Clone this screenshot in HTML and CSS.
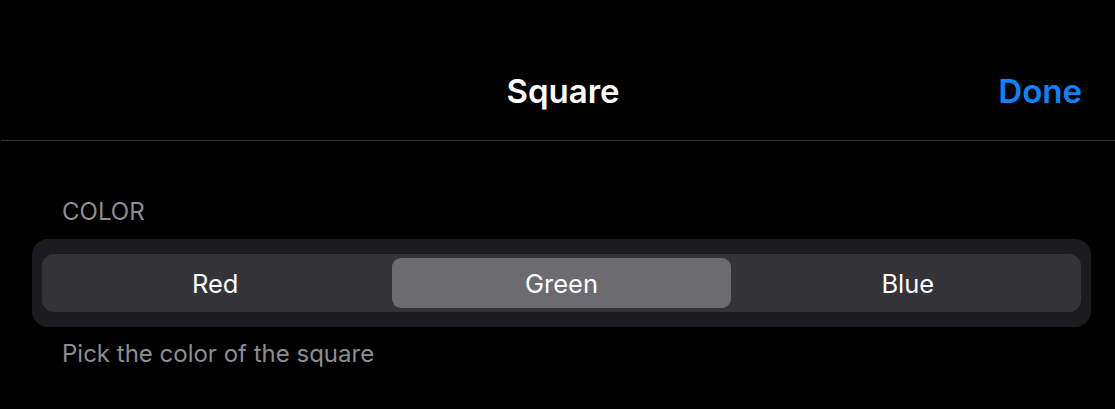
FILE: index.html
```html
<!DOCTYPE html>
<html>
<head>
<meta charset="utf-8">
<link rel="stylesheet" href="styles.css">
</head>
<body>
<div class="sheet">
  <header class="navbar">
    <div class="nav-side"></div>
    <h1 class="nav-title">Square</h1>
    <div class="nav-side nav-right"><span class="done">Done</span></div>
  </header>
  <main class="content">
    <div class="section-header">COLOR</div>
    <div class="card">
      <div class="segmented">
        <div class="segment">Red</div>
        <div class="segment selected">Green</div>
        <div class="segment">Blue</div>
      </div>
    </div>
    <div class="section-footer">Pick the color of the square</div>
  </main>
</div>
</body>
</html>
```
FILE: styles.css
```css
* { box-sizing: border-box; }
html, body { margin: 0; padding: 0; background: #000; }
body {
  width: 1115px;
  height: 409px;
  overflow: hidden;
  font-family: Inter, "Liberation Sans", sans-serif;
  color: #fff;
}
.navbar {
  height: 141px;
  display: grid;
  grid-template-columns: 1fr auto 1fr;
  align-items: center;
  padding: 42px 33px 0 43px;
  border-bottom: 1px solid #38383a;
  margin-left: 1px;
}
.nav-title {
  margin: 0;
  font-size: 33px;
  font-weight: 600;
  color: #fff;
  text-align: center;
  line-height: 40px;
}
.nav-right { display: flex; justify-content: flex-end; }
.done {
  color: #0a84ff;
  font-size: 33px;
  font-weight: 600;
  line-height: 40px;
}
.content {
  padding: 57px 24px 0 32px;
}
.section-header {
  padding-left: 30px;
  font-size: 24px;
  color: #8d8d93;
  line-height: 28px;
  margin-bottom: 13px;
}
.card {
  background: #1c1c1e;
  border-radius: 16px;
  padding: 15px 10px 15px 10px;
}
.segmented {
  display: grid;
  grid-template-columns: repeat(3, 1fr);
  background: #333338;
  border-radius: 12px;
  height: 58px;
}
.segment {
  display: flex;
  align-items: center;
  justify-content: center;
  font-size: 25.5px;
  font-weight: 400;
  color: #fff;
  padding: 4px;
  border-radius: 13px;
}
.segment.selected {
  background: #6b6b70;
  background-clip: content-box;
}
.section-footer {
  padding-left: 30px;
  margin-top: 13px;
  font-size: 24px;
  line-height: 28px;
  color: #8d8d93;
}
```
